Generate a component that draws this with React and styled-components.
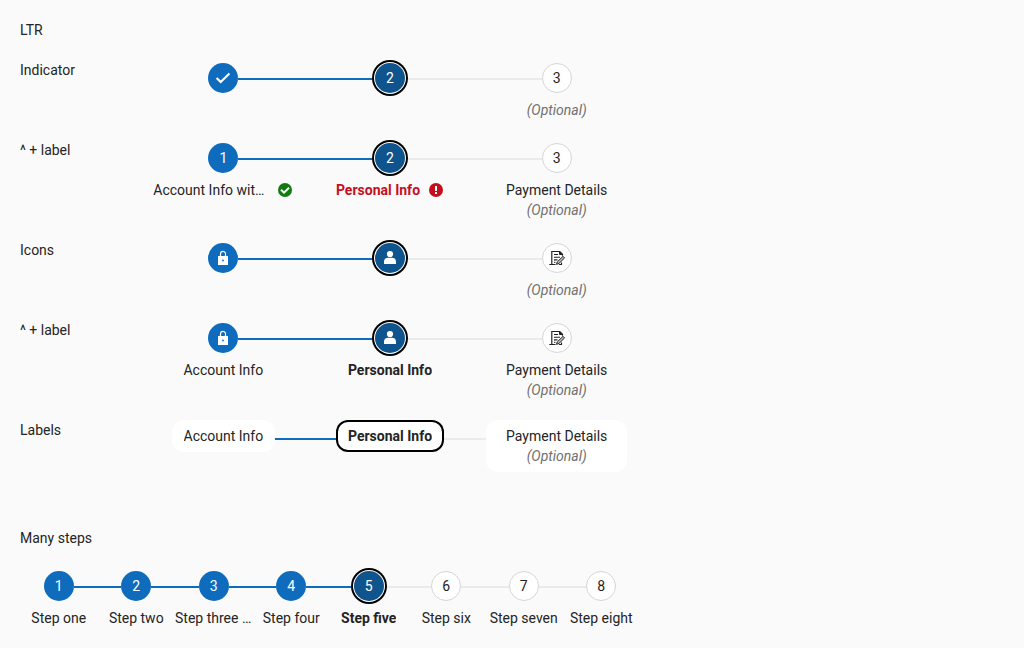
import React from 'react';
import styled, { createGlobalStyle, css } from 'styled-components';

const GlobalStyle = createGlobalStyle`
  * { box-sizing: border-box; }
  body {
    margin: 0;
    background: #fafafa;
    color: #242424;
    font: 14px/20px Roboto, sans-serif;
  }
`;

const Page = styled.main`
  display: flex;
  flex-direction: column;
  gap: 20px;
  max-width: 660px;
  padding: 20px;
`;

const Heading = styled.h2`
  margin: ${(p) => (p.$spaced ? '36px 0 0' : '0')};
  font-size: 14px;
  font-weight: 400;
`;

const Example = styled.section`
  display: grid;
  grid-template-columns: 120px minmax(0, 1fr);
`;

const ExampleName = styled.h3`
  margin: 0;
  font-size: 14px;
  font-weight: 400;
`;

const StepList = styled.ol`
  display: flex;
  margin: 0;
  padding: 0;
  list-style: none;
`;

const StepItem = styled.li`
  flex: 1 1 0;
  min-width: 0;
`;

const StepButton = styled.button`
  display: flex;
  flex-direction: column;
  align-items: center;
  gap: 4px;
  width: 100%;
  padding: 0;
  border: 0;
  background: none;
  color: inherit;
  font: inherit;
  cursor: pointer;
`;

const Rail = styled.span`
  display: flex;
  align-items: flex-start;
  width: 100%;
`;

const lineColors = { done: '#0f6cbd', todo: '#ebebeb', none: 'transparent' };

const Line = styled.span`
  flex: 1 1 0;
  height: 2px;
  margin-top: 18px;
  background: ${(p) => lineColors[p.$kind]};
`;

const circleStates = {
  done: css`
    background: #0f6cbd;
    color: #fff;
  `,
  current: css`
    background: #0f548c;
    color: #fff;
    box-shadow: 0 0 0 1px #fff, 0 0 0 3px #000;
  `,
  todo: css`
    background: #fff;
    border: 1px solid #d6d6d6;
  `,
};

const Circle = styled.span`
  position: relative;
  display: flex;
  align-items: center;
  justify-content: center;
  width: 30px;
  height: 30px;
  margin: 3px 0;
  border-radius: 50%;
  ${(p) => circleStates[p.$state]}
`;

const Pill = styled.span`
  display: flex;
  flex-direction: column;
  align-items: center;
  padding: ${(p) => (p.$wide ? '6px 20px' : '6px 12px')};
  border-radius: 12px;
  background: #fff;
  box-shadow: ${(p) => (p.$current ? 'inset 0 0 0 2px #000' : 'none')};
`;

const Caption = styled.span`
  display: flex;
  flex-direction: column;
  align-items: center;
  width: 100%;
  max-width: 140px;
`;

const LabelRow = styled.span`
  display: flex;
  align-items: center;
  gap: 8px;
  max-width: 100%;
`;

const Label = styled.span`
  min-width: 0;
  overflow: hidden;
  text-overflow: ellipsis;
  white-space: nowrap;
  font-weight: ${(p) => (p.$current ? 700 : 400)};
  color: ${(p) => (p.$error ? '#c50f1f' : 'inherit')};
`;

const Optional = styled.span`
  color: #707070;
  font-style: italic;
`;

const Icon = styled.svg`
  display: block;
  flex: none;
  width: 16px;
  height: 16px;
`;

const CheckIcon = () => (
  <Icon viewBox="0 0 16 16" aria-hidden="true">
    <path d="M1.6 7.9 5.7 12 14.4 3.6" fill="none" stroke="currentColor" strokeWidth="2.1" />
  </Icon>
);

const LockIcon = () => (
  <Icon viewBox="0 0 16 16" aria-hidden="true">
    <path d="M5.5 7V3.9a2.5 2.5 0 0 1 5 0V7" fill="none" stroke="currentColor" strokeWidth="1.2" />
    <path
      fillRule="evenodd"
      fill="currentColor"
      d="M3.3 6h9.4a.3.3 0 0 1 .3.3v8.4a.3.3 0 0 1-.3.3H3.3a.3.3 0 0 1-.3-.3V6.300a.3.3 0 0 1 .3-.3ZM8 9.600a.9.9 0 1 0 0 1.800.9.9 0 0 0 0-1.800Z"
    />
  </Icon>
);

const PersonIcon = () => (
  <Icon viewBox="0 0 16 16" aria-hidden="true">
    <circle cx="8" cy="4" r="3.1" fill="currentColor" />
    <path d="M2 14v-2.400C2 9.500 3.700 7.800 5.800 7.800h4.400C12.300 7.800 14 9.500 14 11.600V14Z" fill="currentColor" />
  </Icon>
);

const FormEditIcon = () => (
  <Icon viewBox="0 0 16 16" aria-hidden="true" fill="none" stroke="currentColor">
    <path d="M2.800 14.500V1.500h8l2.700 2.700v1.600M.3 14.500h6.200M12.500 12.500v2H10" strokeWidth="1.200" />
    <path d="M10.500 1.500v3h3Z" fill="currentColor" />
    <path d="M5 4.500h4M5 7.200h6M5 9.900h3.500M5 12.300h1.500" strokeWidth="1.100" />
    <path d="M7.400 14.400 8.300 11.900 14 6.300 15.600 7.900 9.900 13.500Z" fill="#bbb" />
  </Icon>
);

const SuccessIcon = () => (
  <Icon viewBox="0 0 16 16" role="img" aria-label="Completed">
    <circle cx="8" cy="8" r="7" fill="#107c10" />
    <path d="M4 7.800 7 10.700 12 5.800" fill="none" stroke="#fff" strokeWidth="2" />
  </Icon>
);

const ErrorIcon = () => (
  <Icon viewBox="0 0 16 16" role="img" aria-label="Error">
    <circle cx="8" cy="8" r="7" fill="#c50f1f" />
    <path d="M7 4h2v5H7ZM7 10h2v2H7Z" fill="#fff" />
  </Icon>
);

const statusIcons = { success: <SuccessIcon />, error: <ErrorIcon /> };

function StepText({ step, state }) {
  return (
    <>
      {step.label && (
        <LabelRow>
          <Label $current={state === 'current'} $error={step.status === 'error'}>
            {step.label}
          </Label>
          {statusIcons[step.status]}
        </LabelRow>
      )}
      {step.optional && <Optional>(Optional)</Optional>}
    </>
  );
}

function Stepper({ steps, current, pills, name }) {
  return (
    <StepList aria-label={name}>
      {steps.map((step, i) => {
        const state = i < current ? 'done' : i === current ? 'current' : 'todo';
        const before = i === 0 ? 'none' : i <= current ? 'done' : 'todo';
        const after = i === steps.length - 1 ? 'none' : i < current ? 'done' : 'todo';
        return (
          <StepItem key={i}>
            <StepButton type="button" aria-current={state === 'current' ? 'step' : undefined}>
              <Rail>
                <Line $kind={before} />
                {pills ? (
                  <Pill $current={state === 'current'} $wide={step.optional}>
                    <StepText step={step} state={state} />
                  </Pill>
                ) : (
                  <Circle $state={state}>{step.icon || i + 1}</Circle>
                )}
                <Line $kind={after} />
              </Rail>
              {!pills && (
                <Caption>
                  <StepText step={step} state={state} />
                </Caption>
              )}
            </StepButton>
          </StepItem>
        );
      })}
    </StepList>
  );
}

const examples = [
  { name: 'Indicator', steps: [{ icon: <CheckIcon /> }, {}, { optional: true }] },
  {
    name: '^ + label',
    steps: [
      { label: 'Account Info with a long label', status: 'success' },
      { label: 'Personal Info', status: 'error' },
      { label: 'Payment Details', optional: true },
    ],
  },
  {
    name: 'Icons',
    steps: [{ icon: <LockIcon /> }, { icon: <PersonIcon /> }, { icon: <FormEditIcon />, optional: true }],
  },
  {
    name: '^ + label',
    steps: [
      { icon: <LockIcon />, label: 'Account Info' },
      { icon: <PersonIcon />, label: 'Personal Info' },
      { icon: <FormEditIcon />, label: 'Payment Details', optional: true },
    ],
  },
  {
    name: 'Labels',
    pills: true,
    steps: [{ label: 'Account Info' }, { label: 'Personal Info' }, { label: 'Payment Details', optional: true }],
  },
];

const manySteps = [
  'Step one',
  'Step two',
  'Step three with a long label',
  'Step four',
  'Step five',
  'Step six',
  'Step seven',
  'Step eight',
].map((label) => ({ label }));

export default function App() {
  return (
    <>
      <GlobalStyle />
      <Page>
        <Heading>LTR</Heading>
        {examples.map((example, i) => (
          <Example key={i}>
            <ExampleName>{example.name}</ExampleName>
            <Stepper name={example.name} steps={example.steps} current={1} pills={example.pills} />
          </Example>
        ))}
        <Heading $spaced>Many steps</Heading>
        <Stepper name="Many steps" steps={manySteps} current={4} />
      </Page>
    </>
  );
}
